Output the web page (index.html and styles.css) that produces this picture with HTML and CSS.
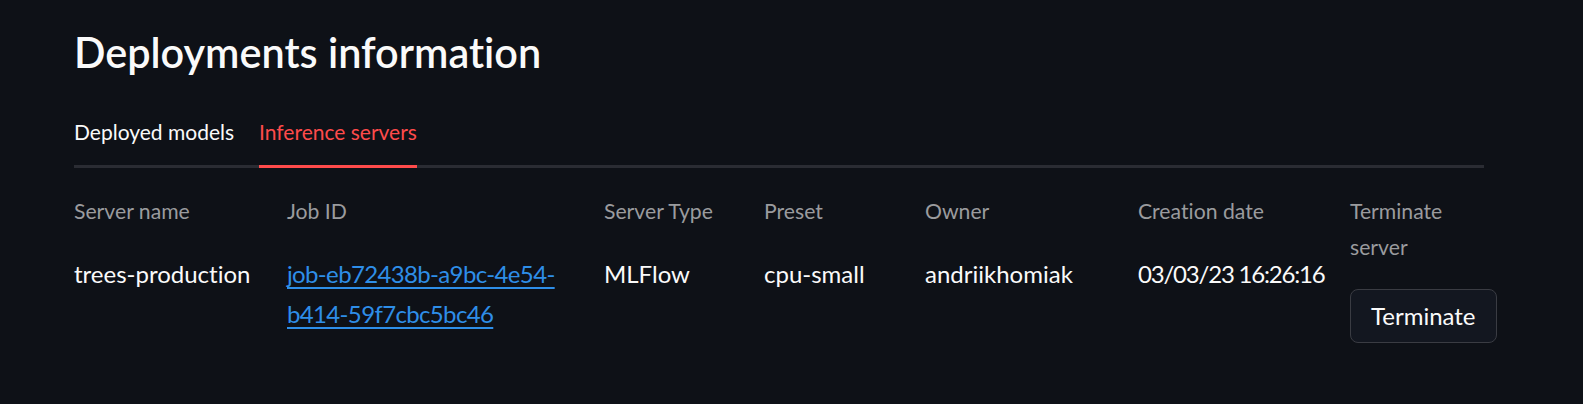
FILE: index.html
```html
<!DOCTYPE html>
<html lang="en">
<head>
<meta charset="utf-8">
<title>Deployments information</title>
<link rel="stylesheet" href="styles.css">
</head>
<body>
<main class="page">
  <h1 class="title">Deployments information</h1>
  <nav class="tabs">
    <div class="tab">Deployed models</div>
    <div class="tab active">Inference servers</div>
  </nav>
  <section class="table">
    <div class="col">
      <div class="head">Server name</div>
      <div class="cell">trees-production</div>
    </div>
    <div class="col">
      <div class="head">Job ID</div>
      <div class="cell"><a class="link" href="#">job-eb72438b-a9bc-4e54-b414-59f7cbc5bc46</a></div>
    </div>
    <div class="col">
      <div class="head">Server Type</div>
      <div class="cell">MLFlow</div>
    </div>
    <div class="col">
      <div class="head">Preset</div>
      <div class="cell">cpu-small</div>
    </div>
    <div class="col">
      <div class="head">Owner</div>
      <div class="cell">andriikhomiak</div>
    </div>
    <div class="col">
      <div class="head">Creation date</div>
      <div class="cell date">03/03/23 16:26:16</div>
    </div>
    <div class="col">
      <div class="head">Terminate server</div>
      <button class="btn" type="button">Terminate</button>
    </div>
  </section>
</main>
</body>
</html>
```

FILE: styles.css
```css
html, body {
  margin: 0;
  padding: 0;
  background: #0e1117;
}
body {
  font-family: Lato, "Noto Sans", sans-serif;
  color: #fafafa;
  font-variant-ligatures: none;
}
.page {
  width: 1410px;
  padding: 28px 0 0 74px;
}
.title {
  margin: 0;
  font-size: 41.4px;
  line-height: 48px;
  font-weight: 600;
  color: #fafafa;
}
.tabs {
  display: flex;
  gap: 25px;
  margin-top: 41px;
  border-bottom: 3px solid #2a2c33;
}
.tab {
  font-size: 21px;
  line-height: 30px;
  padding-bottom: 18px;
  margin-bottom: -3px;
  border-bottom: 3px solid transparent;
  color: #fafafa;
}
.tab.active {
  color: #ff4b4b;
  border-bottom-color: #ff4b4b;
}
.table {
  display: grid;
  grid-template-columns: 193px 297px 140px 141px 193px 192px 1fr;
  column-gap: 20px;
  margin-top: 25px;
}
.col {
  display: flex;
  flex-direction: column;
  align-items: flex-start;
  gap: 24px;
}
.head {
  font-size: 21.2px;
  line-height: 36px;
  color: #9a9b9e;
}
.cell {
  font-size: 24px;
  line-height: 40px;
  margin-top: 1px;
  margin-bottom: -1px;
  color: #fafafa;
}
.date {
  white-space: nowrap;
  letter-spacing: -1.2px;
}
.link {
  color: #2e8ee8;
  letter-spacing: -0.65px;
  text-decoration: underline;
  text-underline-offset: 4px;
}
.btn {
  font-family: inherit;
  font-size: 24px;
  line-height: 30px;
  color: #fafafa;
  background: #131720;
  border: 1px solid #3a3c43;
  border-radius: 8px;
  padding: 11px 20px 11px;
  white-space: nowrap;
  cursor: pointer;
}
```
